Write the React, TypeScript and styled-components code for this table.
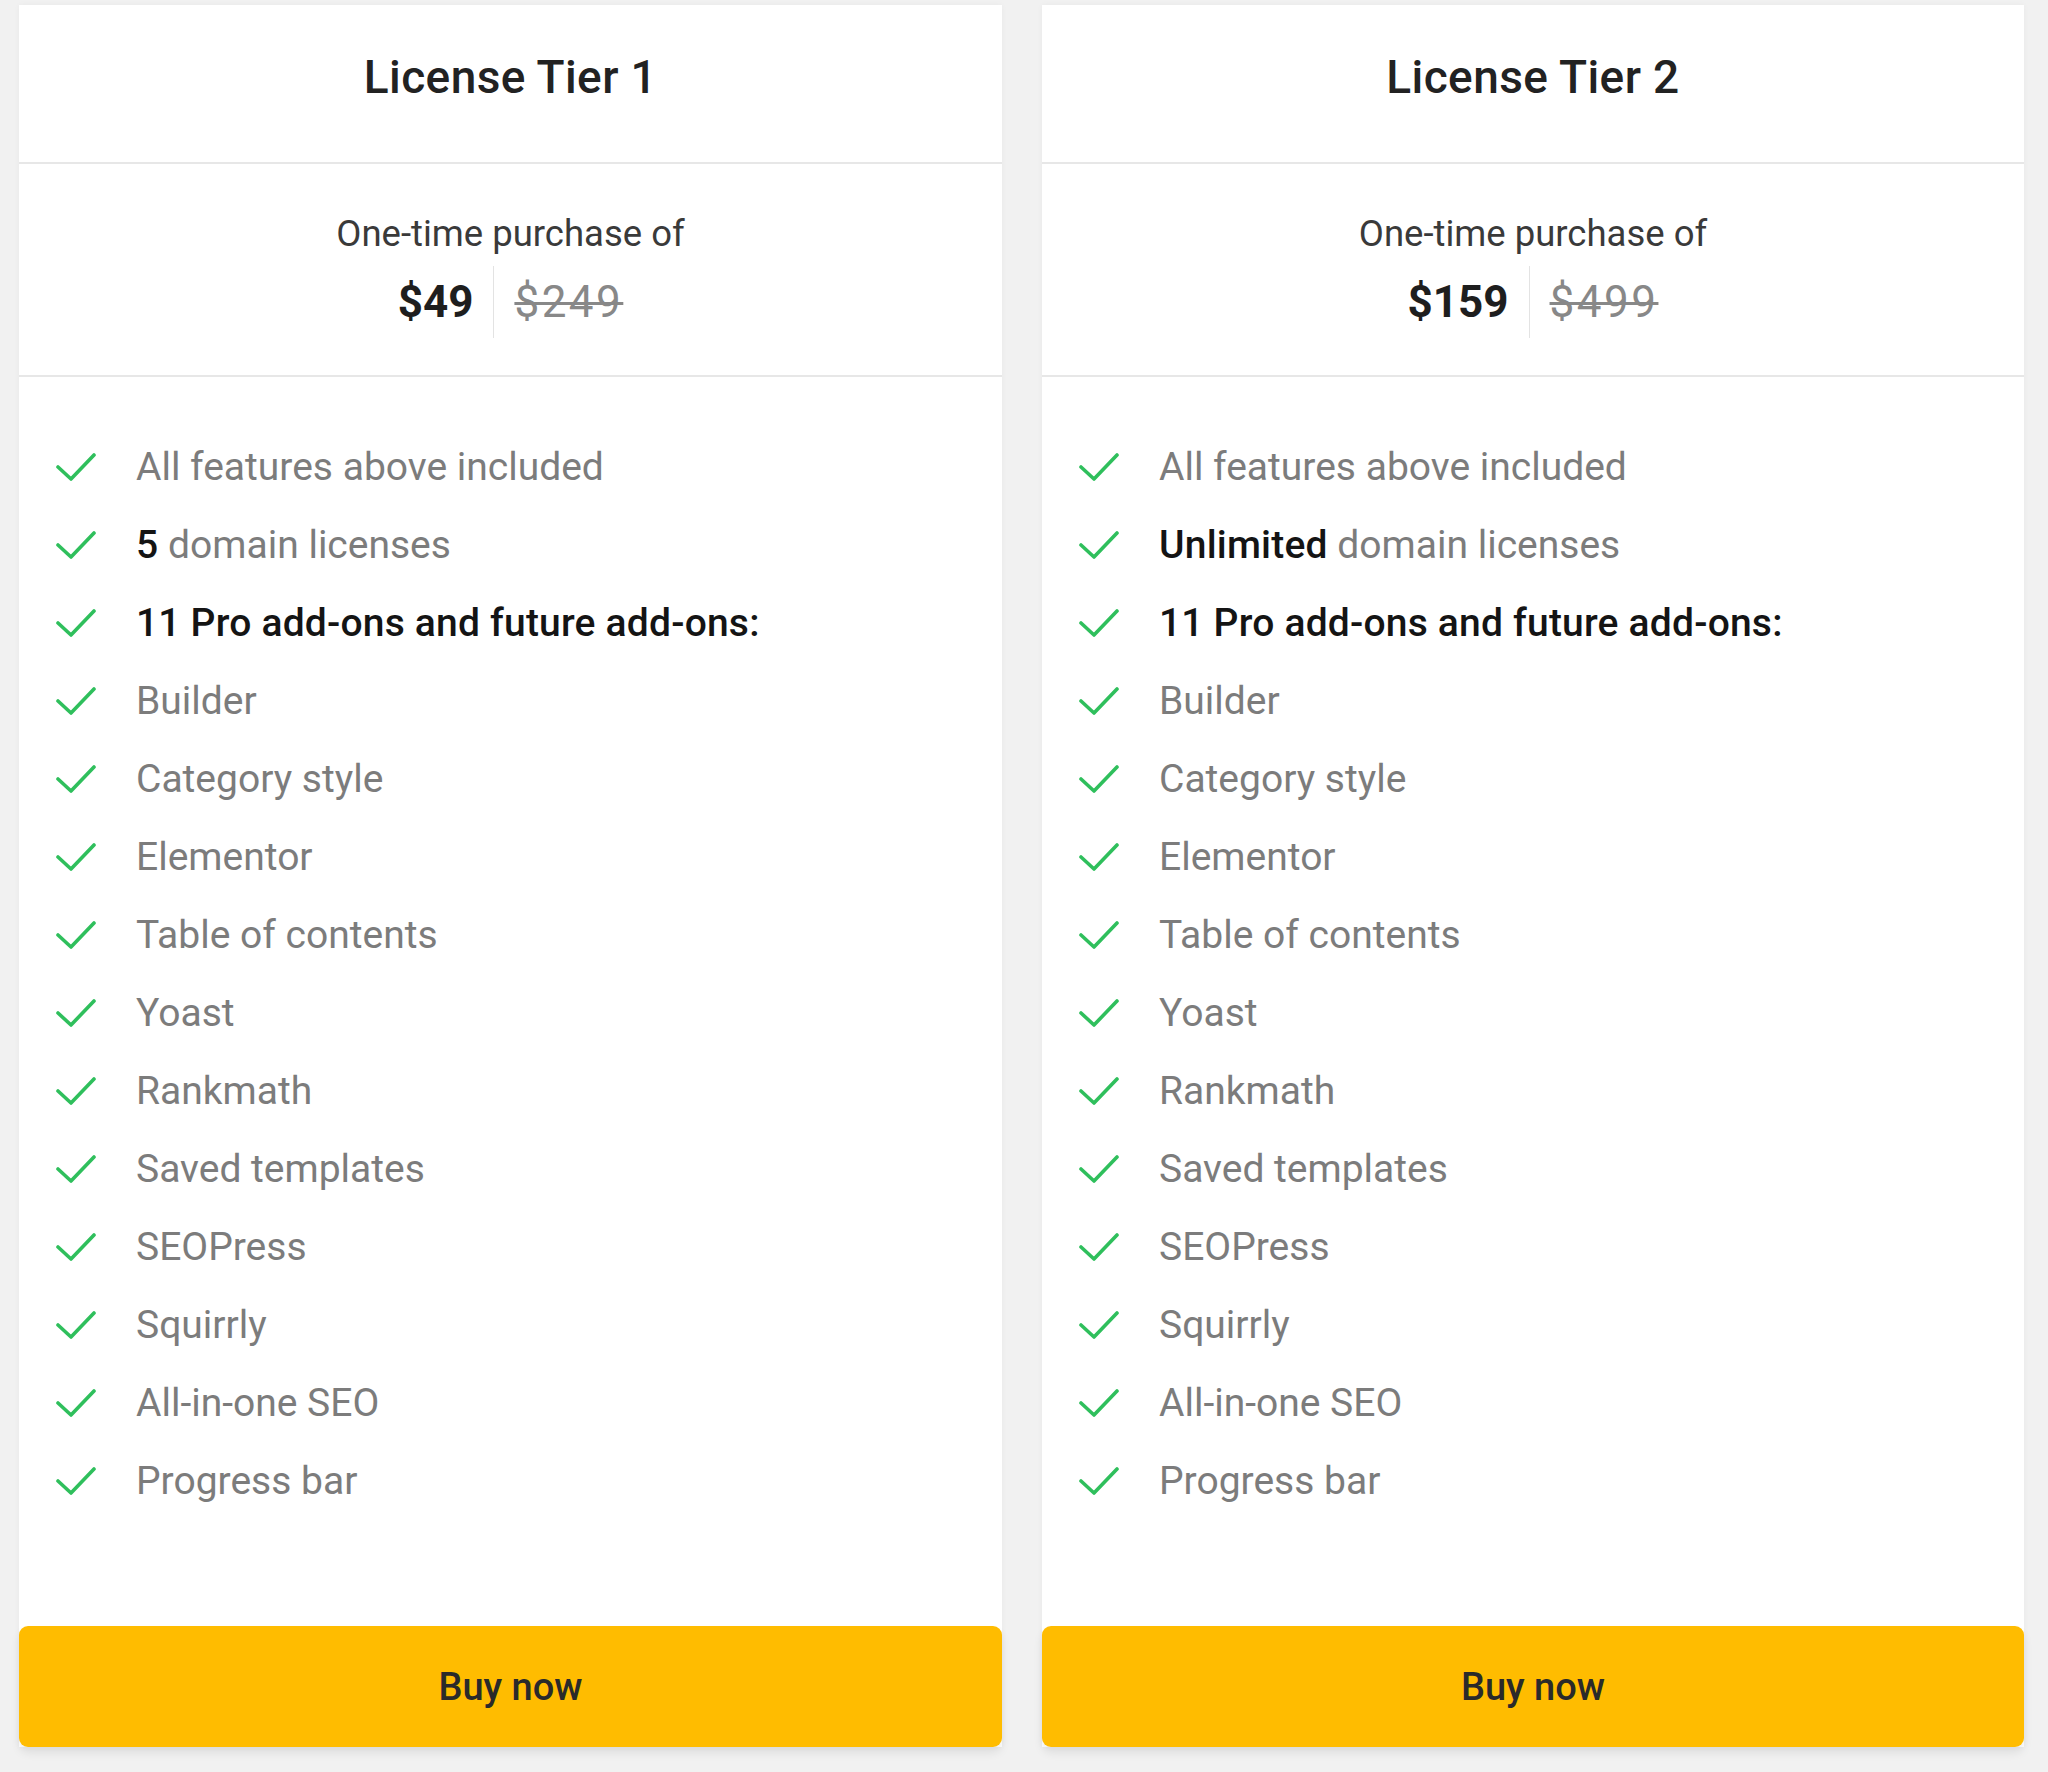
import React from "react";
import styled, { createGlobalStyle } from "styled-components";

const GlobalStyle = createGlobalStyle`
  html, body {
    margin: 0;
    padding: 0;
    background: #f1f1f1;
    font-family: Roboto, "Liberation Sans", Arial, sans-serif;
  }
  * { box-sizing: border-box; }
`;

const Page = styled.div`
  display: grid;
  grid-template-columns: 983px 982px;
  column-gap: 40px;
  padding: 5px 24px 25px 19px;
  width: 2048px;
  min-height: 1772px;
`;

const Card = styled.section`
  display: flex;
  flex-direction: column;
  background: #ffffff;
  height: 1742px;
  box-shadow: 0 0 6px rgba(0, 0, 0, 0.04);
`;

const Header = styled.header`
  height: 159px;
  display: flex;
  align-items: center;
  justify-content: center;
  border-bottom: 2px solid #e7e7e7;
  padding-bottom: 14px;
`;

const Title = styled.h2`
  margin: 0;
  font-size: 46px;
  font-weight: 500;
  color: #222222;
  letter-spacing: 0.4px;
`;

const PriceBox = styled.div`
  height: 213px;
  display: flex;
  flex-direction: column;
  align-items: center;
  justify-content: center;
  gap: 10px;
  border-bottom: 2px solid #e7e7e7;
  padding-top: 11px;
`;

const PriceLabel = styled.div`
  font-size: 36.5px;
  color: #3a3a3a;
  line-height: 44px;
`;

const PriceRow = styled.div`
  display: flex;
  align-items: center;
  height: 72px;
`;

const Price = styled.span`
  font-size: 44px;
  font-weight: 700;
  color: #1e1e1e;
  padding-right: 20px;
  line-height: 72px;
`;

const OldPrice = styled.span`
  font-size: 44px;
  font-weight: 400;
  color: #888888;
  letter-spacing: 2.5px;
  text-decoration: line-through;
  text-decoration-thickness: 3px;
  padding-left: 20px;
  border-left: 1px solid #e3e3e3;
  line-height: 72px;
`;

const Features = styled.ul`
  list-style: none;
  margin: 0;
  padding: 51px 0 0 37px;
  flex: 1;
`;

const Feature = styled.li`
  height: 78px;
  display: flex;
  align-items: center;
  gap: 40px;
  font-size: 39px;
  color: #7c7c7c;
`;

const Strong = styled.strong`
  font-weight: 500;
  color: #141414;
  letter-spacing: 0.2px;
`;

const CheckSvg = styled.svg`
  flex: none;
  width: 40px;
  height: 30px;
`;

const BuyButton = styled.button`
  height: 121px;
  border: none;
  border-radius: 9px;
  background: #ffbc00;
  color: #2a2a2a;
  font-family: Roboto, "Liberation Sans", Arial, sans-serif;
  font-size: 38px;
  font-weight: 500;
  cursor: pointer;
  box-shadow: 0 6px 10px rgba(0, 0, 0, 0.08);
`;

const Check = () => (
  <CheckSvg viewBox="0 0 40 30" aria-hidden="true">
    <polyline
      points="2,15 15,27 38,3"
      fill="none"
      stroke="#2fbf5c"
      strokeWidth="3.6"
      strokeLinecap="round"
      strokeLinejoin="round"
    />
  </CheckSvg>
);

type Tier = {
  title: string;
  price: string;
  old: string;
  domains: string;
};

const tiers: Tier[] = [
  { title: "License Tier 1", price: "$49", old: "$249", domains: "5" },
  { title: "License Tier 2", price: "$159", old: "$499", domains: "Unlimited" },
];

const addons = [
  "Builder",
  "Category style",
  "Elementor",
  "Table of contents",
  "Yoast",
  "Rankmath",
  "Saved templates",
  "SEOPress",
  "Squirrly",
  "All-in-one SEO",
  "Progress bar",
];

const TierCard = ({ tier }: { tier: Tier }) => (
  <Card>
    <Header>
      <Title>{tier.title}</Title>
    </Header>
    <PriceBox>
      <PriceLabel>One-time purchase of</PriceLabel>
      <PriceRow>
        <Price>{tier.price}</Price>
        <OldPrice>{tier.old}</OldPrice>
      </PriceRow>
    </PriceBox>
    <Features>
      <Feature>
        <Check />
        <span>All features above included</span>
      </Feature>
      <Feature>
        <Check />
        <span>
          <Strong>{tier.domains}</Strong> domain licenses
        </span>
      </Feature>
      <Feature>
        <Check />
        <Strong>11 Pro add-ons and future add-ons:</Strong>
      </Feature>
      {addons.map((a) => (
        <Feature key={a}>
          <Check />
          <span>{a}</span>
        </Feature>
      ))}
    </Features>
    <BuyButton>Buy now</BuyButton>
  </Card>
);

export default function App() {
  return (
    <>
      <GlobalStyle />
      <Page>
        {tiers.map((t) => (
          <TierCard key={t.title} tier={t} />
        ))}
      </Page>
    </>
  );
}
